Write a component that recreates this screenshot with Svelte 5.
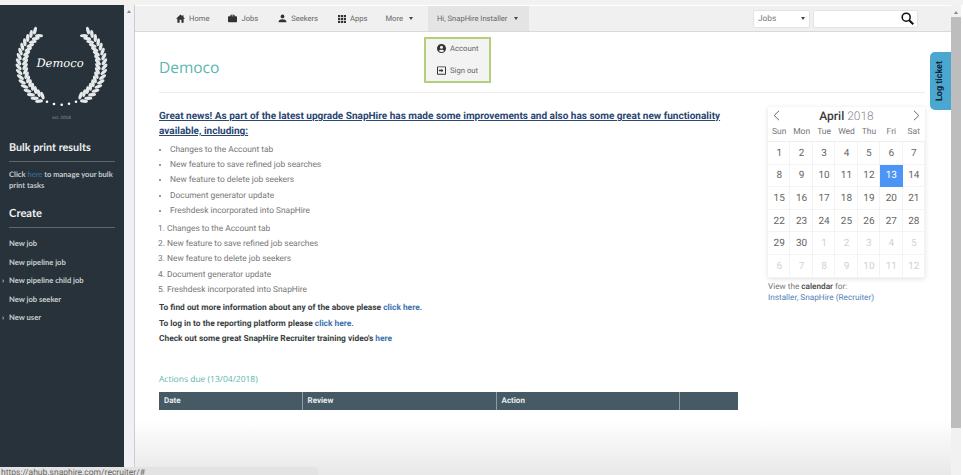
<script>
	const nav = [
		{ key: 'home', label: 'Home', gap: 19 },
		{ key: 'jobs', label: 'Jobs', gap: 20 },
		{ key: 'seekers', label: 'Seekers', gap: 20 },
		{ key: 'apps', label: 'Apps', gap: 18 },
	];
	const updates = [
		'Changes to the Account tab',
		'New feature to save refined job searches',
		'New feature to delete job seekers',
		'Document generator update',
		'Freshdesk incorporated into SnapHire',
	];
	const createLinks = [
		{ label: 'New job' },
		{ label: 'New pipeline job' },
		{ label: 'New pipeline child job', more: true },
		{ label: 'New job seeker' },
		{ label: 'New user', more: true },
	];
	const weekdays = ['Sun', 'Mon', 'Tue', 'Wed', 'Thu', 'Fri', 'Sat'];
	const days = [
		...Array.from({ length: 30 }, (_, i) => ({ n: i + 1 })),
		...Array.from({ length: 12 }, (_, i) => ({ n: i + 1, off: true })),
	];

	// wreath leaves, worked out along an arc; the right side is the left one mirrored
	const cx = 61.5, cy = 64.5;
	const leaves = [];
	for (let i = 0; i < 17; i++) {
		const t = (-52 + i * 6.9) * Math.PI / 180;
		const dir = Math.atan2(-Math.cos(t), -Math.sin(t)) * 180 / Math.PI;
		for (const [r, tilt] of [[36.5, 38], [43, -38]]) {
			leaves.push({
				x: (cx - r * Math.cos(t)).toFixed(1),
				y: (cy + r * Math.sin(t)).toFixed(1),
				a: (dir + tilt).toFixed(1),
			});
		}
	}
	const dots = [[47, 101.7], [54, 104], [61.7, 104.7], [69, 103.7], [76, 101.7]];
</script>

<div class="page">
	<div class="strip"></div>
	<div class="body">
		<aside class="sidebar">
			<svg class="logo" width="124" height="125" viewBox="0 0 124 125" role="img" aria-label="Democo">
				<g fill="#e6e9ea">
					{#each leaves as l}
						<ellipse rx="4" ry="1.7" transform="translate({l.x} {l.y}) rotate({l.a})" />
						<ellipse rx="4" ry="1.7" transform="translate({2 * cx - l.x} {l.y}) rotate({180 - l.a})" />
					{/each}
					{#each dots as d}<circle cx={d[0]} cy={d[1]} r="1.3" fill="#fff" />{/each}
				</g>
				<text class="logo-name" x="60" y="67" text-anchor="middle">Democo</text>
				<text class="logo-est" x="61.500" y="119" text-anchor="middle">est. 2018</text>
			</svg>

			<h3 class="side-title bulk">Bulk print results</h3>
			<p class="side-text">Click <a href="#here">here</a> to manage your bulk print tasks</p>
			<h3 class="side-title create">Create</h3>
			<ul class="side-links">
				{#each createLinks as link}
					<li class:more={link.more}>{link.label}</li>
				{/each}
			</ul>
		</aside>

		<div class="gutter"><span class="arrow-up"></span></div>

		<div class="main">
			<nav class="topbar">
				{#each nav as item}
					<span class="nav-item" style="margin-right: {item.gap}px">
						{#if item.key === 'home'}
							<svg width="9" height="9" viewBox="0 0 12 12"><path d="M6 .8 0 6.2h1.8V11.500h3V7.800h2.400v3.700h3V6.200H12L10 4.400V1.500H8.500v1.600z" fill="#333" /></svg>
						{:else if item.key === 'jobs'}
							<svg width="9" height="9" viewBox="0 0 12 12"><path d="M4 1h4a1 1 0 0 1 1 1v1h2a1 1 0 0 1 1 1v6a1 1 0 0 1-1 1H1a1 1 0 0 1-1-1V4a1 1 0 0 1 1-1h2V2a1 1 0 0 1 1-1zm.800 1v1h2.400V2z" fill="#333" fill-rule="evenodd" /></svg>
						{:else if item.key === 'seekers'}
							<svg width="9" height="9" viewBox="0 0 12 12"><circle cx="6" cy="3.200" r="2.500" fill="#333" /><path d="M1 11V9.600C1 8 3.500 7 6 7s5 1 5 2.600V11z" fill="#333" /></svg>
						{:else}
							<svg width="8" height="8" viewBox="0 0 11 11" fill="#333"><path d="M0 0h3v3H0zM4 0h3v3H4zM8 0h3v3H8zM0 4h3v3H0zM4 4h3v3H4zM8 4h3v3H8zM0 8h3v3H0zM4 8h3v3H4zM8 8h3v3H8z" /></svg>
						{/if}
						{item.label}
					</span>
				{/each}
				<span class="nav-item more">More <i class="caret"></i></span>
				<span class="nav-item user">Hi, SnapHire Installer <i class="caret"></i></span>
				<div class="search">
					<span class="select">Jobs <i class="caret"></i></span>
					<span class="input">
						<svg width="13" height="13" viewBox="0 0 14 14" fill="none" stroke="#111"><circle cx="5.600" cy="5.600" r="4.300" stroke-width="1.700" /><path d="m8.800 8.800 4.400 4.400" stroke-width="2.200" /></svg>
					</span>
				</div>
			</nav>

			<div class="content">
				<h1 class="brand">Democo</h1>
				<div class="columns">
					<section class="news">
						<h2>Great news! As part of the latest upgrade SnapHire has made some improvements and also has some great new functionality available, including:</h2>
						<ul>
							{#each updates as u}<li>{u}</li>{/each}
						</ul>
						<ol>
							{#each updates as u}<li>{u}</li>{/each}
						</ol>
						<p class="strong">To find out more information about any of the above please <a href="#more">click here.</a></p>
						<p class="strong">To log in to the reporting platform please <a href="#reports">click here.</a></p>
						<p class="strong">Check out some great SnapHire Recruiter training video's <a href="#videos">here</a></p>
						<h4 class="due">Actions due (13/04/2018)</h4>
						<table>
							<thead>
								<tr><th class="c1">Date</th><th class="c2">Review</th><th class="c3">Action</th><th></th></tr>
							</thead>
						</table>
					</section>

					<section class="cal-wrap">
						<div class="cal">
							<div class="cal-head">
								<svg width="7" height="11" viewBox="0 0 7 11" fill="none" stroke="#666"><path d="M6 .8 1.200 5.500 6 10.200" /></svg>
								<span><b>April</b> 2018</span>
								<svg width="7" height="11" viewBox="0 0 7 11" fill="none" stroke="#666"><path d="M1 .8l4.800 4.700L1 10.200" /></svg>
							</div>
							<div class="cal-week">
								{#each weekdays as w}<span>{w}</span>{/each}
							</div>
							<div class="cal-grid">
								{#each days as d}
									<span class:off={d.off} class:today={!d.off && d.n === 13}>{d.n}</span>
								{/each}
							</div>
						</div>
						<p class="cal-note">View the <b>calendar</b> for:<br /><a href="#cal">Installer, SnapHire (Recruiter)</a></p>
					</section>
				</div>
			</div>
		</div>

		<div class="scrollbar"><span class="arrow-up"></span><div class="thumb"></div></div>
	</div>

	<div class="dropdown">
		<div class="drop-item">
			<svg width="9" height="9" viewBox="0 0 12 12"><path fill="#333" fill-rule="evenodd" d="M6 0a6 6 0 1 1 0 12A6 6 0 0 1 6 0zm0 2.200a2.100 2.100 0 1 0 0 4.200 2.100 2.100 0 0 0 0-4.200zM2.500 9.300c.8 1 2.100 1.500 3.500 1.500s2.700-.5 3.500-1.500C9 8.200 7.500 7.600 6 7.600s-3 .6-3.500 1.700z" /></svg>
			Account
		</div>
		<div class="drop-item">
			<svg width="9" height="9" viewBox="0 0 12 12"><path fill="#333" fill-rule="evenodd" d="M1 .5h10a1 1 0 0 1 1 1v9a1 1 0 0 1-1 1H1a1 1 0 0 1-1-1v-9a1 1 0 0 1 1-1zm.300 1.300v8.400h9.400V1.800zM6 3.500 8.500 6 6 8.500V6.900H2.500V5.100H6z" /></svg>
			Sign out
		</div>
	</div>

	<div class="log-ticket"><span>Log ticket</span></div>
	<div class="fade"></div>
	<div class="status">https://ahub.snaphire.com/recruiter/#</div>
</div>

<style>
	:global(body) { margin: 0; background: #fff; overflow: hidden; }
	.page { position: relative; width: 963px; height: 475px; overflow: hidden; font-family: Roboto, "Liberation Sans", sans-serif; color: #777; text-rendering: geometricPrecision; }
	.strip { height: 5px; background: #f4f2f0; }
	.body { display: flex; height: 470px; }

	.sidebar { width: 124px; flex: none; background: #27323a; color: #dfe3e4; font-family: Lato, "Open Sans", sans-serif; box-sizing: border-box; padding: 0 9px; }
	.logo { display: block; margin: -5px -9px 0; }
	.logo-name { font-family: "DejaVu Serif", serif; font-style: italic; font-size: 11.500px; fill: #fff; }
	.logo-est { font-size: 4.500px; fill: #8f999f; }
	.side-title { margin: 0; color: #eef0f1; font-weight: 700; border-bottom: 1px solid #5d676e; }
	.bulk { font-size: 10.800px; line-height: 14px; margin-top: 16px; padding-bottom: 6px; }
	.create { font-size: 11.200px; line-height: 16px; margin-top: 15px; padding-bottom: 5px; }
	.side-text { margin: 7px 0 0; font-size: 7.600px; line-height: 11px; font-weight: 700; color: #c4cacd; }
	.side-text a { color: #3f75a5; text-decoration: none; font-weight: 400; }
	.side-links { list-style: none; margin: 6px 0 0; padding: 0; font-size: 7.600px; font-weight: 700; color: #c9ced1; }
	.side-links li { height: 18.500px; line-height: 18.500px; position: relative; }
	.side-links li.more::before { content: '›'; position: absolute; left: -7px; }

	.gutter { width: 10px; flex: none; background: #f0f1f4; border-right: 1px solid #ccc; display: flex; justify-content: center; padding-top: 5px; height: 465px; }
	.arrow-up { width: 0; height: 0; border: 2.500px solid transparent; border-top: 0; border-bottom: 3px solid #888; }

	.main { flex: 1; min-width: 0; }
	.topbar { height: 25px; margin-top: 1px; background: #f0f0f0; border-bottom: 1px solid #d9d9d9; display: flex; align-items: center; padding-left: 41px; font-size: 7.600px; color: #666; }
	.nav-item { display: inline-flex; align-items: center; gap: 4px; white-space: nowrap; }
	.nav-item.more { margin-right: 15px; gap: 6px; }
	.nav-item.user { background: #e4e4e4; align-self: stretch; padding: 0 11px 0 9px; gap: 7px; }
	.caret { display: inline-block; width: 0; height: 0; border: 2.500px solid transparent; border-bottom: 0; border-top: 3px solid #444; }
	.search { display: flex; gap: 3px; margin-left: auto; margin-right: 33px; }
	.select { width: 57px; height: 18px; box-sizing: border-box; background: #fff; border-radius: 2px; display: flex; justify-content: space-between; align-items: center; padding: 0 4px; color: #777; border: 1px solid #e3e3e3; font-size: 8.300px; }
	.input { width: 105px; height: 18px; box-sizing: border-box; background: #fff; border-radius: 2px; border: 1px solid #e3e3e3; display: flex; justify-content: flex-end; align-items: center; padding-right: 3px; }

	.content { padding: 0 26px 0 24px; }
	.brand { margin: 0; padding: 25px 0 15px; font-family: "Open Sans", Lato, sans-serif; font-weight: 400; font-size: 15.500px; line-height: 20px; color: #5bb5b0; border-bottom: 1px solid #ececec; }
	.columns { display: flex; justify-content: space-between; }
	.news { width: 579px; padding-top: 16px; }
	.news h2 { margin: 0; font-size: 10.020px; line-height: 15px; font-weight: 700; color: #2a4672; text-decoration: underline; }
	.news ul { margin: 4px 0 0; padding: 0 0 0 11px; font-size: 8.400px; line-height: 15.200px; }
	.news ol { margin: 3px 0 0; padding: 0 0 0 8px; font-size: 8.400px; line-height: 15.200px; }
	.strong { margin: 0; font-size: 8.400px; line-height: 15.500px; font-weight: 700; color: #3a3f44; }
	.news ol + .strong { margin-top: 3px; }
	.strong a { color: #3f72b0; text-decoration: none; }
	.due { margin: 24px 0 0; font-family: "Open Sans", Lato, sans-serif; font-weight: 400; font-size: 8.500px; line-height: 15px; color: #5bb5b0; }
	table { margin-top: 5px; width: 579px; border-collapse: collapse; table-layout: fixed; }
	th { background: #465a65; height: 18px; padding: 0 0 0 5px; text-align: left; font-size: 8px; color: #e9edef; border-left: 1px solid #8b9aa3; }
	th:first-child { border-left: 0; }
	.c1 { width: 143px; box-sizing: border-box; }
	.c2 { width: 194px; box-sizing: border-box; }
	.c3 { width: 183px; box-sizing: border-box; }

	.cal-wrap { width: 157px; padding-top: 14px; }
	.cal { box-shadow: 0 1px 5px rgba(0, 0, 0, 0.12); }
	.cal-head { height: 17px; display: flex; justify-content: space-between; align-items: center; padding: 0 5px; font-size: 12px; color: #888; font-weight: 300; }
	.cal-head b { color: #3a3a3a; font-weight: 500; }
	.cal-week { display: grid; grid-template-columns: repeat(7, 1fr); height: 15px; padding-bottom: 2px; align-items: center; text-align: center; font-size: 8.500px; color: #777; }
	.cal-grid { display: grid; grid-template-columns: repeat(7, 1fr); grid-auto-rows: 22.600px; border-top: 1px solid #f0f0f0; }
	.cal-grid span { display: flex; align-items: center; justify-content: center; font-size: 10px; color: #666; box-shadow: inset -1px -1px 0 #f3f3f3; }
	.cal-grid .off { color: #d2d2d2; }
	.cal-grid .today { background: #4d94f7; color: #fff; box-shadow: none; }
	.cal-note { margin: 4px 0 0; font-size: 8.200px; line-height: 11px; color: #777; }
	.cal-note b { color: #444; font-weight: 500; }
	.cal-note a { color: #4f7fb8; text-decoration: none; }

	.scrollbar { width: 10px; flex: none; margin-right: 2px; background: #f1f1f1; display: flex; flex-direction: column; align-items: center; padding-top: 6px; box-sizing: border-box; }
	.thumb { width: 100%; height: 411px; margin-top: 3px; background: #bdbdbd; }

	.dropdown { position: absolute; left: 424px; top: 37px; width: 67px; height: 46px; box-sizing: border-box; border: 2px solid #b3cf7c; background: #f3f3f3; padding: 0 0 2px 11px; font-size: 7.700px; color: #666; display: flex; flex-direction: column; justify-content: center; gap: 13px; }
	.drop-item { display: flex; align-items: center; gap: 4px; }
	.log-ticket { position: absolute; left: 930px; top: 52px; width: 21px; height: 58px; background: #4aa8d0; border-radius: 5px 0 0 5px; display: flex; align-items: center; justify-content: center; }
	.log-ticket span { transform: rotate(-90deg); white-space: nowrap; font-size: 9px; font-weight: 700; color: #123; }
	.fade { position: absolute; left: 135px; right: 12px; top: 420px; height: 55px; background: linear-gradient(rgba(228, 228, 228, 0), rgba(228, 228, 228, 0.85)); pointer-events: none; }
	.status { position: absolute; left: 0; top: 467px; width: 318px; height: 8px; overflow: hidden; box-sizing: border-box; background: #e3e3e3; border-radius: 0 3px 0 0; padding-left: 1px; font-size: 8.500px; line-height: 12px; color: #666; }
</style>
